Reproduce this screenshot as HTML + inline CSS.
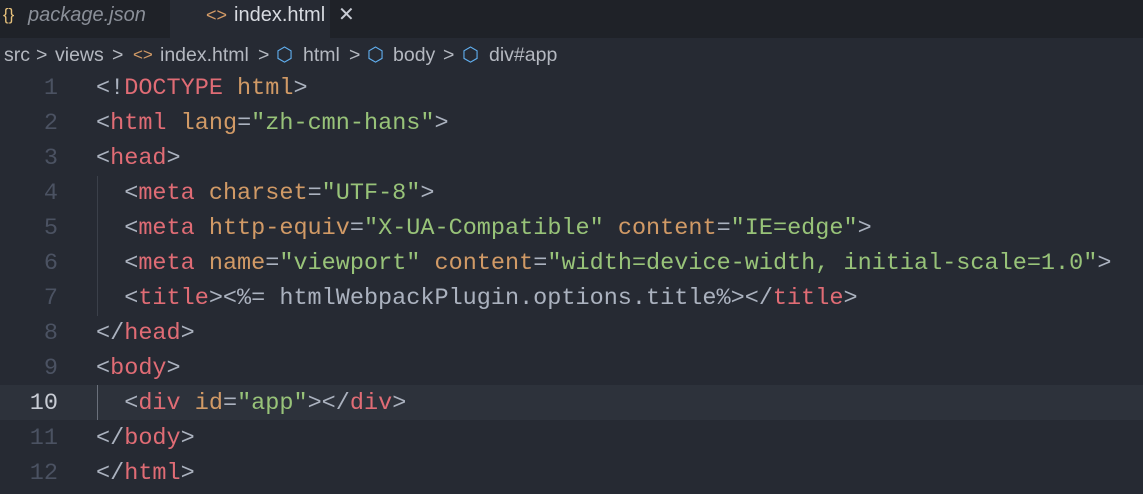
<!DOCTYPE html>
<html><head><style>
body{margin:0;width:1143px;height:494px;overflow:hidden;background:#262a33;font-family:"Liberation Sans",sans-serif;position:relative}
.tabs{position:absolute;left:0;top:0;width:1143px;height:38px;background:#1f2228}
.tab{position:absolute;top:0;height:38px;font-size:20px;white-space:nowrap}
.tab span{position:absolute;top:3px;line-height:24px}
.t1{left:0;width:168px;color:#8a8f98;font-style:italic}
.t2{left:170px;width:160px;background:#262a33;color:#d7dae0}
.bc{position:absolute;top:42px;left:0;font-size:19.5px;color:#b4b8c0;line-height:26px;white-space:nowrap;width:700px;height:28px}
.bc span{position:absolute;top:0}
.code{position:absolute;left:0;top:71px;font-family:"Liberation Mono",monospace;font-size:23.5px;color:#abb2bf}
.ln{position:absolute;left:0;width:58px;text-align:right;color:#4b5262;line-height:35px}
.l{position:absolute;height:35px;line-height:35px;white-space:pre;left:96px}
.row{position:absolute;left:0;width:1143px;height:35px}
.t{color:#e06c75}.a{color:#d19a66}.s{color:#98c379}
.g{position:absolute;left:97px;width:1px;background:#3b404a}
.b{color:#61afef}
</style></head><body>
<div class="tabs">
<div class="tab t1"><span style="color:#e5c07b;font-style:normal;left:3px;font-size:17px">{}</span><span style="left:28px">package.json</span></div>
<div class="tab t2"><span style="color:#d19a66;left:36px;font-size:18px">&lt;&gt;</span><span style="left:64px">index.html</span><span style="left:168px;color:#c8ccd4">✕</span></div>
</div>
<div class="bc">
<span style="left:4px">src</span><span style="left:36px">&gt;</span><span style="left:55px">views</span><span style="left:112px">&gt;</span>
<span style="left:133px;color:#d19a66;font-size:17px">&lt;&gt;</span><span style="left:160px">index.html</span><span style="left:258px">&gt;</span>
<span class="b" style="left:276px">⬡</span><span style="left:303px">html</span><span style="left:349px">&gt;</span>
<span class="b" style="left:367px">⬡</span><span style="left:393px">body</span><span style="left:443px">&gt;</span>
<span class="b" style="left:462px">⬡</span><span style="left:489px">div#app</span>
</div>
<div class="code">
<div class="row" style="top:314px;background:#2d323b"></div>
<div class="g" style="top:105px;height:140px"></div>
<div class="g" style="top:314px;height:35px;background:#6a707b"></div>
<div class="ln" style="top:0">1</div>
<div class="ln" style="top:35px">2</div>
<div class="ln" style="top:70px">3</div>
<div class="ln" style="top:105px">4</div>
<div class="ln" style="top:140px">5</div>
<div class="ln" style="top:175px">6</div>
<div class="ln" style="top:210px">7</div>
<div class="ln" style="top:245px">8</div>
<div class="ln" style="top:280px">9</div>
<div class="ln" style="top:315px;color:#c8ccd4">10</div>
<div class="ln" style="top:350px">11</div>
<div class="ln" style="top:385px">12</div>
<div class="l" style="top:0">&lt;!<span class="t">DOCTYPE</span> <span class="a">html</span>&gt;</div>
<div class="l" style="top:35px">&lt;<span class="t">html</span> <span class="a">lang</span>=<span class="s">"zh-cmn-hans"</span>&gt;</div>
<div class="l" style="top:70px">&lt;<span class="t">head</span>&gt;</div>
<div class="l" style="top:105px">  &lt;<span class="t">meta</span> <span class="a">charset</span>=<span class="s">"UTF-8"</span>&gt;</div>
<div class="l" style="top:140px">  &lt;<span class="t">meta</span> <span class="a">http-equiv</span>=<span class="s">"X-UA-Compatible"</span> <span class="a">content</span>=<span class="s">"IE=edge"</span>&gt;</div>
<div class="l" style="top:175px">  &lt;<span class="t">meta</span> <span class="a">name</span>=<span class="s">"viewport"</span> <span class="a">content</span>=<span class="s">"width=device-width, initial-scale=1.0"</span>&gt;</div>
<div class="l" style="top:210px">  &lt;<span class="t">title</span>&gt;&lt;%= htmlWebpackPlugin.options.title%&gt;&lt;/<span class="t">title</span>&gt;</div>
<div class="l" style="top:245px">&lt;/<span class="t">head</span>&gt;</div>
<div class="l" style="top:280px">&lt;<span class="t">body</span>&gt;</div>
<div class="l" style="top:315px">  &lt;<span class="t">div</span> <span class="a">id</span>=<span class="s">"app"</span>&gt;&lt;/<span class="t">div</span>&gt;</div>
<div class="l" style="top:350px">&lt;/<span class="t">body</span>&gt;</div>
<div class="l" style="top:385px">&lt;/<span class="t">html</span>&gt;</div>
</div>
</body></html>
